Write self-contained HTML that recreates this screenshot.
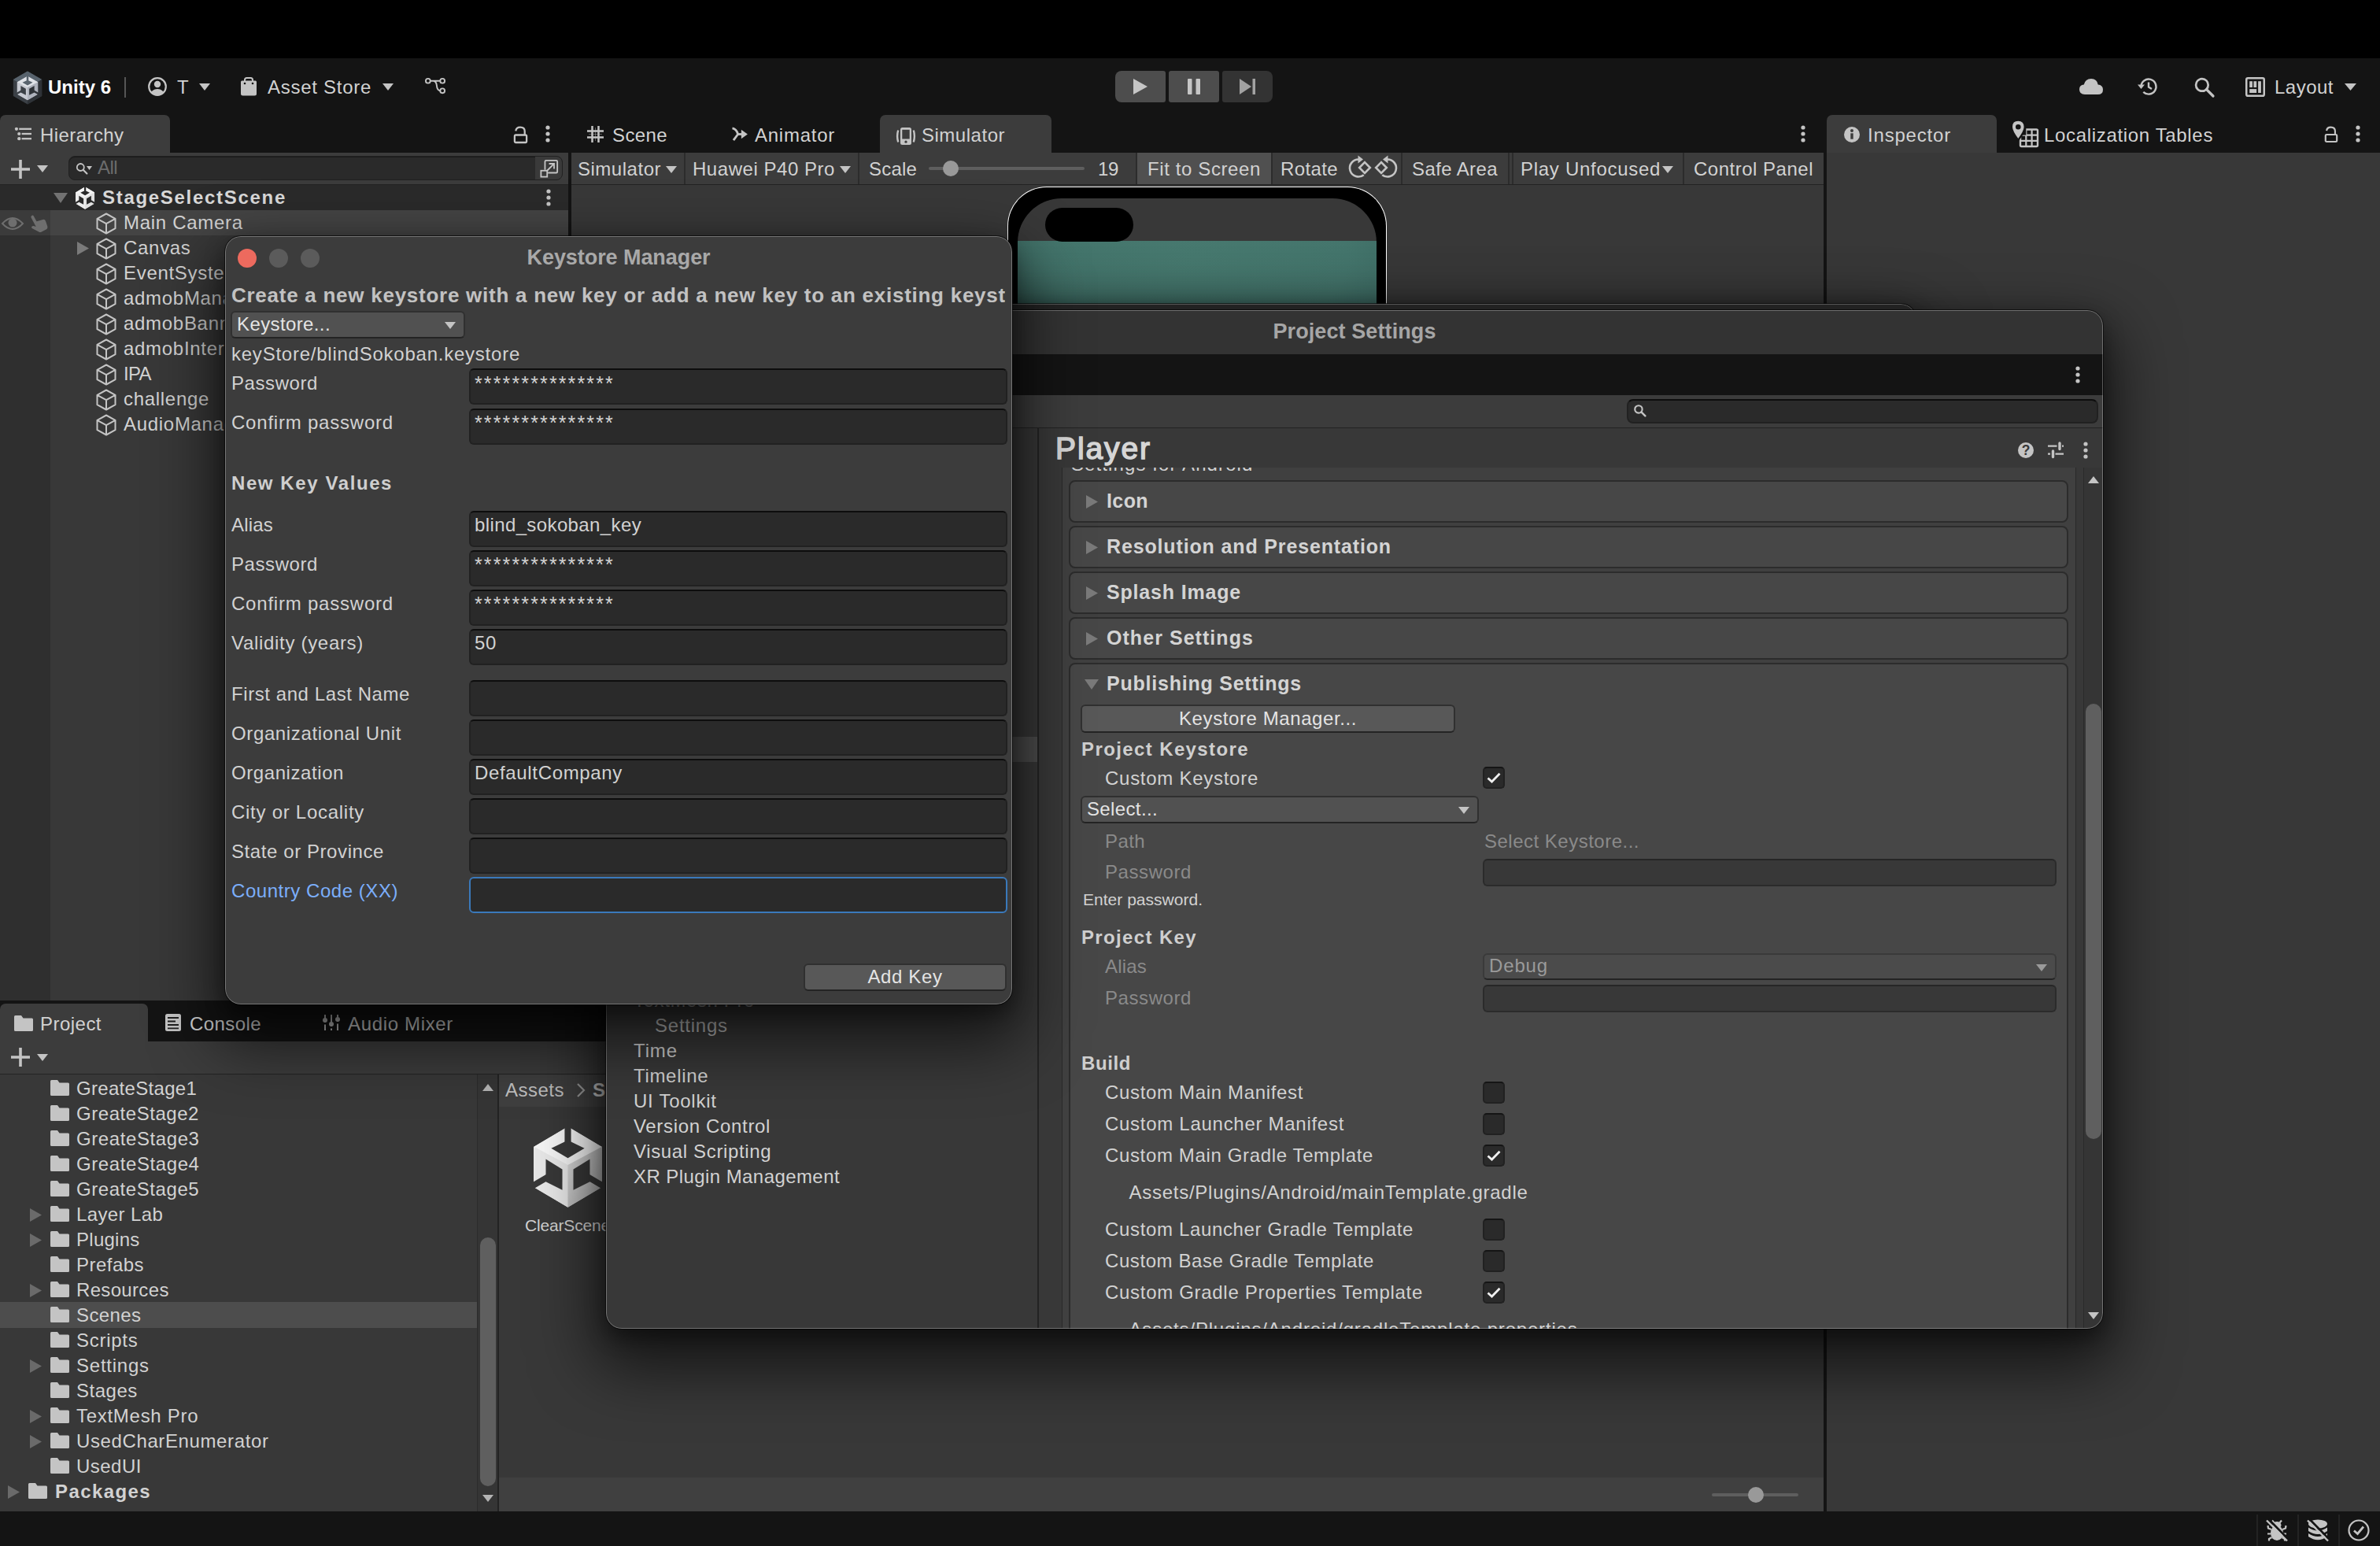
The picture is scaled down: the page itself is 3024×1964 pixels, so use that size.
<!DOCTYPE html>
<html><head><meta charset="utf-8"><title>Unity</title>
<style>
html,body{margin:0;padding:0;background:#141414;}
body{width:3024px;height:1964px;position:relative;overflow:hidden;font-family:"Liberation Sans",sans-serif;}
.t{position:absolute;white-space:nowrap;line-height:40px;height:40px;}
.win{position:absolute;overflow:hidden;}
svg{display:block;overflow:visible}
</style></head><body>
<div style="position:absolute;left:0px;top:0px;width:3024px;height:74px;background:#000;"></div>
<svg style="position:absolute;left:17.2px;top:89.5px;" width="36" height="43" viewBox="-18 -21.5 36 43"><polygon points="0.00,-21.00 18.19,-10.50 18.19,10.50 0.00,21.00 -18.19,10.50 -18.19,-10.50" fill="#3b4046"/><polygon points="0.00,-21.00 18.19,-10.50 0.00,0.00 -18.19,-10.50" fill="#58636d"/><polygon points="18.19,-10.50 0.00,0.00 0.00,21.00 18.19,10.50" fill="#2e3237"/><defs><mask id="um1" maskUnits="userSpaceOnUse" x="-15.5" y="-16.650000000000002" width="31.0" height="34.1"><polygon points="0.00,-15.10 13.42,-7.35 13.42,8.15 0.00,15.90 -13.42,8.15 -13.42,-7.35" fill="#fff"/><polygon points="0.00,-9.83 6.51,-6.73 0.00,-3.01 -6.51,-6.73" fill="#000"/><polygon points="-1.26,-16.65 1.26,-16.65 1.26,-8.90 -1.26,-8.90" fill="#000"/><polygon points="-8.63,-2.62 -2.15,1.33 -2.15,9.23 -8.63,6.01" fill="#000"/><polygon points="-14.72,6.83 -7.75,2.80 -7.75,5.50 -14.72,9.53" fill="#000"/><polygon points="8.63,-2.62 2.15,1.33 2.15,9.23 8.63,6.01" fill="#000"/><polygon points="14.72,6.83 7.75,2.80 7.75,5.50 14.72,9.53" fill="#000"/></mask></defs><g mask="url(#um1)"><polygon points="0.00,-15.10 13.42,-7.35 13.42,8.15 0.00,15.90 -13.42,8.15 -13.42,-7.35" fill="#c6c9d1"/><polygon points="0.00,-15.10 13.42,-7.35 0.00,-0.38 -13.42,-7.35" fill="#dfe2e7"/><polygon points="-13.42,-7.35 0.00,-0.38 0.00,15.90 -13.42,8.15" fill="#c6c9d1"/><polygon points="13.42,-7.35 0.00,-0.38 0.00,15.90 13.42,8.15" fill="#aeb2bc"/></g></svg>
<div class="t" style="left:61.0px;top:91.1px;font-size:24px;color:#ffffff;letter-spacing:-0.002px;font-weight:700;">Unity 6</div>
<div style="position:absolute;left:158px;top:98px;width:2px;height:26px;background:#555;"></div>
<svg style="position:absolute;left:188px;top:98px;" width="24" height="24" viewBox="0 0 24 24"><defs><clipPath id="acc"><circle cx="12" cy="12" r="10.800"/></clipPath></defs><circle cx="12" cy="12" r="10.800" fill="none" stroke="#c4c4c4" stroke-width="2.200"/><circle cx="12" cy="9" r="4.200" fill="#c4c4c4"/><ellipse cx="12" cy="21.500" rx="8.500" ry="6.500" fill="#c4c4c4" clip-path="url(#acc)"/></svg>
<div class="t" style="left:225.0px;top:91.1px;font-size:24px;color:#d2d2d2;letter-spacing:-1.656px;">T</div>
<svg style="position:absolute;left:253.0px;top:106.0px;" width="14" height="9" viewBox="0 0 14 9"><path d="M0 0H14L7.0 9Z" fill="#c4c4c4"/></svg>
<svg style="position:absolute;left:305px;top:96px;" width="22" height="26" viewBox="0 0 22 26"><path d="M1 8Q1 6.500 2.500 6.500H19.500Q21 6.500 21 8V23Q21 25.500 18.500 25.500H3.500Q1 25.500 1 23Z" fill="#c4c4c4"/><path d="M6 9V5.500Q6 3 8.500 3H13.500Q16 3 16 5.500V9" fill="none" stroke="#c4c4c4" stroke-width="2"/><circle cx="6" cy="10" r="1.300" fill="#141414"/><circle cx="16" cy="10" r="1.300" fill="#141414"/></svg>
<div class="t" style="left:340.0px;top:91.1px;font-size:24px;color:#d2d2d2;letter-spacing:0.720px;">Asset Store</div>
<svg style="position:absolute;left:486.0px;top:106.0px;" width="14" height="9" viewBox="0 0 14 9"><path d="M0 0H14L7.0 9Z" fill="#c4c4c4"/></svg>
<svg style="position:absolute;left:540px;top:98px;" width="27" height="22" viewBox="0 0 28 22"><circle cx="4" cy="4.500" r="3" fill="none" stroke="#c4c4c4" stroke-width="2"/><circle cx="23" cy="4.500" r="3" fill="none" stroke="#c4c4c4" stroke-width="2"/><circle cx="23" cy="17.500" r="3" fill="none" stroke="#c4c4c4" stroke-width="2"/><path d="M7 4.500H20M11 4.500Q15 5 15.500 11Q16 17 20 17.500" fill="none" stroke="#c4c4c4" stroke-width="2"/></svg>
<div style="position:absolute;left:1417px;top:90px;width:64px;height:40px;background:#4d4d4d;border-radius:8px 3px 3px 8px;"></div>
<div style="position:absolute;left:1485px;top:90px;width:64px;height:40px;background:#4d4d4d;border-radius:3px;"></div>
<div style="position:absolute;left:1553px;top:90px;width:64px;height:40px;background:#333;border-radius:3px 8px 8px 3px;"></div>
<svg style="position:absolute;left:1440px;top:100px;" width="18" height="20" viewBox="0 0 18 20"><path d="M0 0V20L18 10Z" fill="#c6c6c6"/></svg>
<svg style="position:absolute;left:1509px;top:100px;" width="16" height="20" viewBox="0 0 16 20"><rect x="0" y="0" width="5.500" height="20" rx="1" fill="#c6c6c6"/><rect x="10.500" y="0" width="5.500" height="20" rx="1" fill="#c6c6c6"/></svg>
<svg style="position:absolute;left:1575px;top:100px;" width="20" height="20" viewBox="0 0 20 20"><path d="M0 0V20L15 10Z" fill="#a2a2a2"/><rect x="16.500" y="0" width="3.500" height="20" fill="#a2a2a2"/></svg>
<svg style="position:absolute;left:2642px;top:100px;" width="30" height="20" viewBox="0 0 30 20"><path d="M7 20Q0 20 0 13.500Q0 8 5.800 7.500Q7.500 0 15 0Q22.500 0 23.700 7.500Q30 8 30 14Q30 20 23.500 20Z" fill="#c4c4c4"/></svg>
<svg style="position:absolute;left:2716px;top:98px;" width="26" height="24" viewBox="0 0 26 24"><path d="M4.500 12A9.500 9.500 0 1 1 7.300 18.800" fill="none" stroke="#c4c4c4" stroke-width="2.400"/><path d="M0 9.500H9L4.500 15Z" fill="#c4c4c4"/><path d="M14 6.500V12.500L18 15" fill="none" stroke="#c4c4c4" stroke-width="2.400"/></svg>
<svg style="position:absolute;left:2788px;top:98px;" width="25" height="25" viewBox="0 0 24 24"><circle cx="9.500" cy="9.500" r="7.500" fill="none" stroke="#c4c4c4" stroke-width="2.6"/><path d="M15 15L23 23" stroke="#c4c4c4" stroke-width="3.2" stroke-linecap="round"/></svg>
<svg style="position:absolute;left:2853px;top:98px;" width="25" height="25" viewBox="0 0 24 24"><rect x="1.200" y="1.200" width="21.600" height="21.600" rx="1.800" fill="none" stroke="#c4c4c4" stroke-width="2.400"/><rect x="5" y="5" width="3.600" height="7.500" fill="#c4c4c4"/><rect x="10" y="5" width="3.600" height="7.500" fill="#c4c4c4"/><rect x="15.500" y="5" width="3.600" height="14.200" fill="#c4c4c4"/><rect x="5" y="14.500" width="8.600" height="4.700" fill="#c4c4c4"/></svg>
<div class="t" style="left:2890.0px;top:91.1px;font-size:24px;color:#d2d2d2;letter-spacing:0.492px;">Layout</div>
<svg style="position:absolute;left:2978.5px;top:106.0px;" width="15" height="9" viewBox="0 0 15 9"><path d="M0 0H15L7.5 9Z" fill="#c4c4c4"/></svg>
<div style="position:absolute;left:0px;top:146px;width:216px;height:48px;background:#3c3c3c;border-radius:7px 7px 0 0;"></div>
<svg style="position:absolute;left:19px;top:161px;" width="21" height="18" viewBox="0 0 22 18"><circle cx="2" cy="2.5" r="2.200" fill="#c4c4c4"/><rect x="5.5" y="1.3" width="16.5" height="2.400" fill="#c4c4c4"/><circle cx="5.5" cy="9" r="2.200" fill="#c4c4c4"/><rect x="9.0" y="7.8" width="13.0" height="2.400" fill="#c4c4c4"/><circle cx="5.5" cy="15.5" r="2.200" fill="#c4c4c4"/><rect x="9.0" y="14.3" width="13.0" height="2.400" fill="#c4c4c4"/></svg>
<div class="t" style="left:51.0px;top:151.9px;font-size:24px;color:#d2d2d2;letter-spacing:0.424px;">Hierarchy</div>
<svg style="position:absolute;left:652px;top:160px;" width="19" height="23" viewBox="0 0 20 24"><rect x="2" y="12" width="16" height="10" rx="1.500" fill="none" stroke="#c4c4c4" stroke-width="2.400"/><path d="M3.5 6.500Q4 1.500 9.500 1.500Q15.500 1.500 15.500 7V12" fill="none" stroke="#c4c4c4" stroke-width="2.400"/></svg>
<svg style="position:absolute;left:692px;top:158px;" width="8" height="24" viewBox="0 0 8 24"><circle cx="4" cy="4" r="2.6" fill="#c4c4c4"/><circle cx="4" cy="12" r="2.6" fill="#c4c4c4"/><circle cx="4" cy="20" r="2.6" fill="#c4c4c4"/></svg>
<svg style="position:absolute;left:746px;top:160px;" width="21" height="21" viewBox="0 0 20 20"><path d="M6.200 0V20M13.800 0V20M0 6.200H20M0 13.800H20" stroke="#c4c4c4" stroke-width="2.400" fill="none"/><path d="M10 2V18M2 10H18" stroke="#c4c4c4" stroke-width="0.800" fill="none" opacity="0.500"/></svg>
<div class="t" style="left:778.0px;top:151.9px;font-size:24px;color:#d2d2d2;letter-spacing:0.391px;">Scene</div>
<svg style="position:absolute;left:929px;top:162px;" width="21" height="17" viewBox="0 0 22 18"><path d="M1.500 1Q7 2 9 9L3 17" fill="none" stroke="#c4c4c4" stroke-width="3" stroke-linejoin="round"/><path d="M8 9H17" stroke="#c4c4c4" stroke-width="3"/><path d="M13.500 3L22 9L13.500 15Z" fill="#c4c4c4"/></svg>
<div class="t" style="left:959.0px;top:151.9px;font-size:24px;color:#d2d2d2;letter-spacing:0.744px;">Animator</div>
<div style="position:absolute;left:1118px;top:146px;width:218px;height:48px;background:#3c3c3c;border-radius:7px 7px 0 0;"></div>
<svg style="position:absolute;left:1138px;top:159.5px;" width="26" height="24" viewBox="0 0 26 24"><rect x="6" y="2" width="14" height="22" rx="2.500" fill="#c4c4c4"/><rect x="8.300" y="4.800" width="9.400" height="11.700" fill="#3c3c3c"/><circle cx="13" cy="20.200" r="1.600" fill="#3c3c3c"/><path d="M3.200 5.500Q1 13 3.200 20.500M22.800 5.500Q25 13 22.800 20.500" fill="none" stroke="#c4c4c4" stroke-width="2.400"/></svg>
<div class="t" style="left:1171.0px;top:151.9px;font-size:24px;color:#d2d2d2;letter-spacing:0.514px;">Simulator</div>
<svg style="position:absolute;left:2287px;top:158px;" width="8" height="24" viewBox="0 0 8 24"><circle cx="4" cy="4" r="2.6" fill="#c4c4c4"/><circle cx="4" cy="12" r="2.6" fill="#c4c4c4"/><circle cx="4" cy="20" r="2.6" fill="#c4c4c4"/></svg>
<div style="position:absolute;left:2321px;top:146px;width:216px;height:48px;background:#3c3c3c;border-radius:7px 7px 0 0;"></div>
<svg style="position:absolute;left:2343px;top:161px;" width="20" height="20" viewBox="0 0 20 20"><circle cx="10" cy="10" r="10" fill="#c4c4c4"/><rect x="8.300" y="8.300" width="3.400" height="7.400" fill="#3c3c3c"/><circle cx="10" cy="5" r="2" fill="#3c3c3c"/></svg>
<div class="t" style="left:2373.0px;top:151.9px;font-size:24px;color:#d2d2d2;letter-spacing:0.809px;">Inspector</div>
<svg style="position:absolute;left:2556px;top:154px;" width="34" height="33" viewBox="0 0 34 33"><rect x="11" y="10.500" width="22" height="21.500" rx="1.500" fill="none" stroke="#c4c4c4" stroke-width="2.400"/><path d="M18.300 10.500V32M25.600 10.500V32M11 17.600H33M11 24.800H33" stroke="#c4c4c4" stroke-width="2.200"/><rect x="8" y="8" width="10.300" height="9.600" fill="#141414"/><path d="M18.300 9.300V17.600H9.800V24" fill="none" stroke="#c4c4c4" stroke-width="2.400" opacity="0"/><path d="M8.300 -1.500Q16.800 -1.500 16.800 7.300Q16.800 13 8.300 24Q-0.200 13 -0.200 7.300Q-0.200 -1.500 8.300 -1.500Z" fill="#c4c4c4" stroke="#141414" stroke-width="2.400"/><circle cx="8.300" cy="7.300" r="3.300" fill="#141414"/></svg>
<div class="t" style="left:2597.0px;top:151.9px;font-size:24px;color:#d2d2d2;letter-spacing:0.668px;">Localization Tables</div>
<svg style="position:absolute;left:2953px;top:160px;" width="18" height="22" viewBox="0 0 20 24"><rect x="2" y="12" width="16" height="10" rx="1.500" fill="none" stroke="#c4c4c4" stroke-width="2.400"/><path d="M3.5 6.500Q4 1.500 9.500 1.500Q15.500 1.500 15.500 7V12" fill="none" stroke="#c4c4c4" stroke-width="2.400"/></svg>
<svg style="position:absolute;left:2992px;top:158px;" width="8" height="24" viewBox="0 0 8 24"><circle cx="4" cy="4" r="2.6" fill="#c4c4c4"/><circle cx="4" cy="12" r="2.6" fill="#c4c4c4"/><circle cx="4" cy="20" r="2.6" fill="#c4c4c4"/></svg>
<div style="position:absolute;left:0px;top:194px;width:722px;height:1077px;background:#383838;"></div>
<div style="position:absolute;left:0px;top:194px;width:722px;height:40px;background:#3c3c3c;"></div>
<div style="position:absolute;left:0px;top:234px;width:722px;height:1px;background:#232323;"></div>
<svg style="position:absolute;left:14px;top:203px;" width="24" height="24" viewBox="0 0 24 24"><path d="M12 0V24M0 12H24" stroke="#c4c4c4" stroke-width="3.600"/></svg>
<svg style="position:absolute;left:47.0px;top:210.0px;" width="14" height="9" viewBox="0 0 14 9"><path d="M0 0H14L7.0 9Z" fill="#c4c4c4"/></svg>
<div style="position:absolute;left:87px;top:198px;width:628px;height:31px;background:#2a2a2a;border-radius:8px;box-shadow:inset 0 1px 0 #1a1a1a;border:1px solid #212121;box-sizing:border-box;"></div>
<svg style="position:absolute;left:96px;top:206px;" width="18" height="16" viewBox="-1 -1 30 26"><circle cx="9.500" cy="9.500" r="7.500" fill="none" stroke="#c4c4c4" stroke-width="3"/><path d="M15 15L23 23" stroke="#c4c4c4" stroke-width="3.6" stroke-linecap="round"/></svg>
<svg style="position:absolute;left:110px;top:211px;" width="7" height="5" viewBox="0 0 7 5"><path d="M0 0H7L3.500 5Z" fill="#c4c4c4"/></svg>
<div class="t" style="left:124.0px;top:192.6px;font-size:24px;color:#6c6c6c;letter-spacing:-0.557px;">All</div>
<div style="position:absolute;left:680px;top:199px;width:34px;height:29px;background:#3a3a3a;border-radius:0 7px 7px 0;"></div>
<svg style="position:absolute;left:686px;top:202px;" width="24" height="24" viewBox="0 0 26 26"><path d="M7 15V3.500Q7 2 8.500 2H22.500Q24 2 24 3.500V17.500Q24 19 22.500 19H11" fill="none" stroke="#c4c4c4" stroke-width="2"/><rect x="1.500" y="16" width="8.500" height="8.500" fill="none" stroke="#c4c4c4" stroke-width="2"/><path d="M10 16L19 7M12.500 6.500H19.500V13.500" fill="none" stroke="#c4c4c4" stroke-width="2"/></svg>
<div style="position:absolute;left:0px;top:235px;width:722px;height:32px;background:#2a2a2a;"></div>
<div style="position:absolute;left:0px;top:267px;width:64px;height:1004px;background:#2f2f2f;"></div>
<div style="position:absolute;left:0px;top:267px;width:722px;height:32px;background:#444;"></div>
<div style="position:absolute;left:0px;top:267px;width:64px;height:32px;background:#3b3b3b;"></div>
<svg style="position:absolute;left:68.0px;top:244.5px;" width="18" height="13" viewBox="0 0 18 13"><path d="M0 0H18L9.0 13Z" fill="#727272"/></svg>
<svg style="position:absolute;left:96px;top:236.5px" width="24.2" height="29" viewBox="-43.3 -50 86.6 100" preserveAspectRatio="none"><defs><mask id="um2" maskUnits="userSpaceOnUse" x="-50" y="-55.00000000000001" width="100" height="110.00000000000001"><polygon points="0.00,-50.00 43.30,-25.00 43.30,25.00 0.00,50.00 -43.30,25.00 -43.30,-25.00" fill="#fff"/><polygon points="0.00,-33.00 21.00,-23.00 0.00,-11.00 -21.00,-23.00" fill="#000"/><polygon points="-4.05,-55.00 4.05,-55.00 4.05,-30.00 -4.05,-30.00" fill="#000"/><polygon points="-27.85,-9.75 -6.95,3.00 -6.95,28.50 -27.85,18.10" fill="#000"/><polygon points="-47.50,20.75 -25.00,7.75 -25.00,16.45 -47.50,29.45" fill="#000"/><polygon points="27.85,-9.75 6.95,3.00 6.95,28.50 27.85,18.10" fill="#000"/><polygon points="47.50,20.75 25.00,7.75 25.00,16.45 47.50,29.45" fill="#000"/></mask></defs><g mask="url(#um2)"><polygon points="0.00,-50.00 43.30,-25.00 43.30,25.00 0.00,50.00 -43.30,25.00 -43.30,-25.00" fill="#ececec"/><polygon points="0.00,-50.00 43.30,-25.00 0.00,-2.50 -43.30,-25.00" fill="#f4f4f4"/><polygon points="-43.30,-25.00 0.00,-2.50 0.00,50.00 -43.30,25.00" fill="#ececec"/><polygon points="43.30,-25.00 0.00,-2.50 0.00,50.00 43.30,25.00" fill="#e0e0e0"/></g></svg>
<div class="t" style="left:130.0px;top:231.1px;font-size:24px;color:#d8d8d8;letter-spacing:1.701px;font-weight:700;">StageSelectScene</div>
<svg style="position:absolute;left:693px;top:239px;" width="8" height="24" viewBox="0 0 8 24"><circle cx="4" cy="4" r="2.6" fill="#c4c4c4"/><circle cx="4" cy="12" r="2.6" fill="#c4c4c4"/><circle cx="4" cy="20" r="2.6" fill="#c4c4c4"/></svg>
<svg style="position:absolute;left:2px;top:275px;" width="28" height="18" viewBox="0 0 28 18"><path d="M1 9Q14 -5 27 9Q14 23 1 9Z" fill="none" stroke="#6e6e6e" stroke-width="2"/><circle cx="14" cy="8" r="5.500" fill="#6e6e6e"/></svg>
<svg style="position:absolute;left:35px;top:270px;" width="26" height="26" viewBox="0 0 24 24"><g transform="rotate(-28 12 12)"><path d="M9 1.500Q11.500 0.500 11.500 3V10L19 11.500Q21.500 12 21 15L20 21Q19.500 23.500 17 23.500H10.500Q9 23.500 8 22L3 14.500Q2.500 13 4 12.500Q5.500 12.300 6.500 13.500L8 15V3Q8 2 9 1.500Z" fill="#6e6e6e"/></g></svg>
<svg style="position:absolute;left:122px;top:270.2px;" width="26" height="28" viewBox="0 0 26 28"><path d="M13 1.5L24.500 7.800V20.200L13 26.500L1.500 20.200V7.800Z M1.500 7.800L13 14.200L24.500 7.800 M13 14.200V26.500" fill="none" stroke="#c4c4c4" stroke-width="2" stroke-linejoin="round"/></svg>
<div class="t" style="left:157.0px;top:263.1px;font-size:24px;color:#d2d2d2;letter-spacing:0.700px;">Main Camera</div>
<svg style="position:absolute;left:122px;top:302.2px;" width="26" height="28" viewBox="0 0 26 28"><path d="M13 1.5L24.500 7.800V20.200L13 26.500L1.500 20.200V7.800Z M1.500 7.800L13 14.200L24.500 7.800 M13 14.200V26.500" fill="none" stroke="#c4c4c4" stroke-width="2" stroke-linejoin="round"/></svg>
<div class="t" style="left:157.0px;top:295.1px;font-size:24px;color:#d2d2d2;letter-spacing:0.700px;">Canvas</div>
<svg style="position:absolute;left:122px;top:334.2px;" width="26" height="28" viewBox="0 0 26 28"><path d="M13 1.5L24.500 7.800V20.200L13 26.500L1.500 20.200V7.800Z M1.500 7.800L13 14.200L24.500 7.800 M13 14.200V26.500" fill="none" stroke="#c4c4c4" stroke-width="2" stroke-linejoin="round"/></svg>
<div class="t" style="left:157.0px;top:327.1px;font-size:24px;color:#d2d2d2;letter-spacing:0.700px;">EventSystem</div>
<svg style="position:absolute;left:122px;top:366.2px;" width="26" height="28" viewBox="0 0 26 28"><path d="M13 1.5L24.500 7.800V20.200L13 26.500L1.500 20.200V7.800Z M1.500 7.800L13 14.200L24.500 7.800 M13 14.200V26.500" fill="none" stroke="#c4c4c4" stroke-width="2" stroke-linejoin="round"/></svg>
<div class="t" style="left:157.0px;top:359.1px;font-size:24px;color:#d2d2d2;letter-spacing:0.700px;">admobManager</div>
<svg style="position:absolute;left:122px;top:398.2px;" width="26" height="28" viewBox="0 0 26 28"><path d="M13 1.5L24.500 7.800V20.200L13 26.500L1.500 20.200V7.800Z M1.500 7.800L13 14.200L24.500 7.800 M13 14.200V26.500" fill="none" stroke="#c4c4c4" stroke-width="2" stroke-linejoin="round"/></svg>
<div class="t" style="left:157.0px;top:391.1px;font-size:24px;color:#d2d2d2;letter-spacing:0.700px;">admobBanner</div>
<svg style="position:absolute;left:122px;top:430.2px;" width="26" height="28" viewBox="0 0 26 28"><path d="M13 1.5L24.500 7.800V20.200L13 26.500L1.500 20.200V7.800Z M1.500 7.800L13 14.200L24.500 7.800 M13 14.200V26.500" fill="none" stroke="#c4c4c4" stroke-width="2" stroke-linejoin="round"/></svg>
<div class="t" style="left:157.0px;top:423.1px;font-size:24px;color:#d2d2d2;letter-spacing:0.700px;">admobInterstitial</div>
<svg style="position:absolute;left:122px;top:462.2px;" width="26" height="28" viewBox="0 0 26 28"><path d="M13 1.5L24.500 7.800V20.200L13 26.500L1.500 20.200V7.800Z M1.500 7.800L13 14.200L24.500 7.800 M13 14.200V26.500" fill="none" stroke="#c4c4c4" stroke-width="2" stroke-linejoin="round"/></svg>
<div class="t" style="left:157.0px;top:455.1px;font-size:24px;color:#d2d2d2;letter-spacing:-0.641px;">IPA</div>
<svg style="position:absolute;left:122px;top:494.2px;" width="26" height="28" viewBox="0 0 26 28"><path d="M13 1.5L24.500 7.800V20.200L13 26.500L1.500 20.200V7.800Z M1.500 7.800L13 14.200L24.500 7.800 M13 14.200V26.500" fill="none" stroke="#c4c4c4" stroke-width="2" stroke-linejoin="round"/></svg>
<div class="t" style="left:157.0px;top:487.1px;font-size:24px;color:#d2d2d2;letter-spacing:0.700px;">challenge</div>
<svg style="position:absolute;left:122px;top:526.2px;" width="26" height="28" viewBox="0 0 26 28"><path d="M13 1.5L24.500 7.800V20.200L13 26.500L1.500 20.200V7.800Z M1.500 7.800L13 14.200L24.500 7.800 M13 14.200V26.500" fill="none" stroke="#c4c4c4" stroke-width="2" stroke-linejoin="round"/></svg>
<div class="t" style="left:157.0px;top:519.1px;font-size:24px;color:#d2d2d2;letter-spacing:0.700px;">AudioManager</div>
<svg style="position:absolute;left:98.0px;top:306.5px;" width="15" height="17" viewBox="0 0 15 17"><path d="M0 0V17L15 8.5Z" fill="#7a7a7a"/></svg>
<div style="position:absolute;left:726px;top:194px;width:1591px;height:1077px;background:#383838;"></div>
<div style="position:absolute;left:726px;top:194px;width:1591px;height:40px;background:#3c3c3c;"></div>
<div style="position:absolute;left:726px;top:234px;width:1591px;height:1px;background:#232323;"></div>
<div class="t" style="left:734.0px;top:195.1px;font-size:24px;color:#d2d2d2;letter-spacing:0.514px;">Simulator</div>
<svg style="position:absolute;left:846.0px;top:210.5px;" width="14" height="9" viewBox="0 0 14 9"><path d="M0 0H14L7.0 9Z" fill="#c4c4c4"/></svg>
<div style="position:absolute;left:869px;top:194px;width:2px;height:40px;background:#2c2c2c;"></div>
<div class="t" style="left:880.0px;top:195.1px;font-size:24px;color:#d2d2d2;letter-spacing:0.541px;">Huawei P40 Pro</div>
<svg style="position:absolute;left:1067.0px;top:210.5px;" width="14" height="9" viewBox="0 0 14 9"><path d="M0 0H14L7.0 9Z" fill="#c4c4c4"/></svg>
<div style="position:absolute;left:1090px;top:194px;width:2px;height:40px;background:#2c2c2c;"></div>
<div class="t" style="left:1104.0px;top:195.1px;font-size:24px;color:#d2d2d2;letter-spacing:0.194px;">Scale</div>
<div style="position:absolute;left:1180px;top:212px;width:198px;height:4px;background:#5e5e5e;border-radius:2px;"></div>
<div style="position:absolute;left:1198px;top:204px;width:20px;height:20px;background:#999;border-radius:50%;"></div>
<div class="t" style="left:1395.0px;top:195.1px;font-size:24px;color:#d2d2d2;letter-spacing:-0.344px;">19</div>
<div style="position:absolute;left:1443px;top:194px;width:2px;height:40px;background:#2c2c2c;"></div>
<div style="position:absolute;left:1445px;top:194px;width:170px;height:40px;background:#505050;"></div>
<div class="t" style="left:1458.0px;top:195.1px;font-size:24px;color:#d2d2d2;letter-spacing:0.611px;">Fit to Screen</div>
<div style="position:absolute;left:1615px;top:194px;width:2px;height:40px;background:#2c2c2c;"></div>
<div class="t" style="left:1627.0px;top:195.1px;font-size:24px;color:#d2d2d2;letter-spacing:0.383px;">Rotate</div>
<svg style="position:absolute;left:1713px;top:198px;" width="30" height="28" viewBox="0 0 30 28"><path d="M13.38 4.51A11 11 0 1 0 19.77 24.17" fill="none" stroke="#c4c4c4" stroke-width="2.600"/><path d="M12.500 -0.500L19 4.500L12.500 9.500Z" fill="#c4c4c4"/><path d="M21 8.200L27.800 15L21 21.800L14.200 15Z" fill="none" stroke="#c4c4c4" stroke-width="2.600"/></svg>
<svg style="position:absolute;left:1746px;top:198px;" width="30" height="28" viewBox="0 0 30 28"><g transform="translate(30 0) scale(-1 1)"><path d="M13.38 4.51A11 11 0 1 0 19.77 24.17" fill="none" stroke="#c4c4c4" stroke-width="2.600"/><path d="M12.500 -0.500L19 4.500L12.500 9.500Z" fill="#c4c4c4"/><path d="M21 8.200L27.800 15L21 21.800L14.200 15Z" fill="none" stroke="#c4c4c4" stroke-width="2.600"/></g></svg>
<div style="position:absolute;left:1780px;top:194px;width:2px;height:40px;background:#2c2c2c;"></div>
<div class="t" style="left:1794.0px;top:195.1px;font-size:24px;color:#d2d2d2;letter-spacing:0.398px;">Safe Area</div>
<div style="position:absolute;left:1916px;top:194px;width:2px;height:40px;background:#2c2c2c;"></div>
<div style="position:absolute;left:1921px;top:194px;width:2px;height:40px;background:#2c2c2c;"></div>
<div class="t" style="left:1932.0px;top:195.1px;font-size:24px;color:#d2d2d2;letter-spacing:0.709px;">Play Unfocused</div>
<svg style="position:absolute;left:2112.0px;top:210.5px;" width="14" height="9" viewBox="0 0 14 9"><path d="M0 0H14L7.0 9Z" fill="#c4c4c4"/></svg>
<div style="position:absolute;left:2138px;top:194px;width:2px;height:40px;background:#2c2c2c;"></div>
<div class="t" style="left:2152.0px;top:195.1px;font-size:24px;color:#d2d2d2;letter-spacing:0.507px;">Control Panel</div>
<div style="position:absolute;left:1280px;top:237px;width:482px;height:200px;border:1.5px solid #fff;border-bottom:none;border-radius:50px 50px 0 0;background:#000;box-sizing:border-box;"></div>
<div style="position:absolute;left:1293px;top:252px;width:456px;height:160px;border-radius:56px 56px 0 0;background:#383838;overflow:hidden;"><div style="position:absolute;left:0;top:54px;width:456px;height:110px;background:radial-gradient(ellipse 70% 160% at 50% 20%,#47796f 0%,#44756c 60%,#3a6660 100%);"></div></div>
<div style="position:absolute;left:1328px;top:264px;width:112px;height:43px;background:#000;border-radius:22px;"></div>
<div style="position:absolute;left:2321px;top:194px;width:703px;height:1726px;background:#383838;"></div>
<div style="position:absolute;left:0px;top:1275px;width:188px;height:48px;background:#3c3c3c;border-radius:7px 7px 0 0;"></div>
<svg style="position:absolute;left:18px;top:1290px;" width="24" height="20" viewBox="0 0 24 20"><path d="M1.500 0H9L11.500 3.500H22.500Q24 3.500 24 5V18.500Q24 20 22.500 20H1.500Q0 20 0 18.500V1.500Q0 0 1.500 0Z" fill="#c4c4c4"/></svg>
<div class="t" style="left:51.0px;top:1280.6px;font-size:24px;color:#d2d2d2;letter-spacing:0.471px;">Project</div>
<svg style="position:absolute;left:210px;top:1288px;" width="20" height="22" viewBox="0 0 20 22"><rect x="0" y="0" width="20" height="22" rx="2.500" fill="#c4c4c4"/><path d="M3 5H17M3 9.500H13M3 14H17M3 18.300H17" stroke="#1e1e1e" stroke-width="1.800"/></svg>
<div class="t" style="left:241.0px;top:1280.6px;font-size:24px;color:#d2d2d2;letter-spacing:0.424px;">Console</div>
<svg style="position:absolute;left:410px;top:1289px;" width="22" height="20" viewBox="0 0 22 20"><path d="M3 0V20" stroke="#c4c4c4" stroke-width="2"/><circle cx="3" cy="7" r="3" fill="#c4c4c4"/><rect x="0.5" y="10" width="5" height="2.500" fill="#141414"/><path d="M11 0V20" stroke="#c4c4c4" stroke-width="2"/><circle cx="11" cy="12" r="3" fill="#c4c4c4"/><rect x="8.5" y="15" width="5" height="2.500" fill="#141414"/><path d="M19 0V20" stroke="#c4c4c4" stroke-width="2"/><circle cx="19" cy="6" r="3" fill="#c4c4c4"/><rect x="16.5" y="9" width="5" height="2.500" fill="#141414"/></svg>
<div class="t" style="left:442.0px;top:1280.6px;font-size:24px;color:#d2d2d2;letter-spacing:0.662px;">Audio Mixer</div>
<div style="position:absolute;left:0px;top:1323px;width:2317px;height:597px;background:#383838;"></div>
<div style="position:absolute;left:0px;top:1323px;width:2317px;height:41px;background:#3c3c3c;"></div>
<div style="position:absolute;left:0px;top:1364px;width:2317px;height:1px;background:#232323;"></div>
<svg style="position:absolute;left:14px;top:1331px;" width="24" height="24" viewBox="0 0 24 24"><path d="M12 0V24M0 12H24" stroke="#c4c4c4" stroke-width="3.600"/></svg>
<svg style="position:absolute;left:47.0px;top:1339.0px;" width="14" height="9" viewBox="0 0 14 9"><path d="M0 0H14L7.0 9Z" fill="#c4c4c4"/></svg>
<svg style="position:absolute;left:64px;top:1372px;" width="24" height="20" viewBox="0 0 24 20"><path d="M1.500 0H9L11.500 3.500H22.500Q24 3.500 24 5V18.500Q24 20 22.500 20H1.500Q0 20 0 18.500V1.500Q0 0 1.500 0Z" fill="#c4c4c4"/></svg>
<div class="t" style="left:97.0px;top:1363.1px;font-size:24px;color:#d2d2d2;letter-spacing:0.305px;">GreateStage1</div>
<svg style="position:absolute;left:64px;top:1404px;" width="24" height="20" viewBox="0 0 24 20"><path d="M1.500 0H9L11.500 3.500H22.500Q24 3.500 24 5V18.500Q24 20 22.500 20H1.500Q0 20 0 18.500V1.500Q0 0 1.500 0Z" fill="#c4c4c4"/></svg>
<div class="t" style="left:97.0px;top:1395.1px;font-size:24px;color:#d2d2d2;letter-spacing:0.547px;">GreateStage2</div>
<svg style="position:absolute;left:64px;top:1436px;" width="24" height="20" viewBox="0 0 24 20"><path d="M1.500 0H9L11.500 3.500H22.500Q24 3.500 24 5V18.500Q24 20 22.500 20H1.500Q0 20 0 18.500V1.500Q0 0 1.500 0Z" fill="#c4c4c4"/></svg>
<div class="t" style="left:97.0px;top:1427.1px;font-size:24px;color:#d2d2d2;letter-spacing:0.589px;">GreateStage3</div>
<svg style="position:absolute;left:64px;top:1468px;" width="24" height="20" viewBox="0 0 24 20"><path d="M1.500 0H9L11.500 3.500H22.500Q24 3.500 24 5V18.500Q24 20 22.500 20H1.500Q0 20 0 18.500V1.500Q0 0 1.500 0Z" fill="#c4c4c4"/></svg>
<div class="t" style="left:97.0px;top:1459.1px;font-size:24px;color:#d2d2d2;letter-spacing:0.589px;">GreateStage4</div>
<svg style="position:absolute;left:64px;top:1500px;" width="24" height="20" viewBox="0 0 24 20"><path d="M1.500 0H9L11.500 3.500H22.500Q24 3.500 24 5V18.500Q24 20 22.500 20H1.500Q0 20 0 18.500V1.500Q0 0 1.500 0Z" fill="#c4c4c4"/></svg>
<div class="t" style="left:97.0px;top:1491.1px;font-size:24px;color:#d2d2d2;letter-spacing:0.564px;">GreateStage5</div>
<svg style="position:absolute;left:64px;top:1532px;" width="24" height="20" viewBox="0 0 24 20"><path d="M1.500 0H9L11.500 3.500H22.500Q24 3.500 24 5V18.500Q24 20 22.500 20H1.500Q0 20 0 18.500V1.500Q0 0 1.500 0Z" fill="#c4c4c4"/></svg>
<svg style="position:absolute;left:38.0px;top:1535.0px;" width="15" height="17" viewBox="0 0 15 17"><path d="M0 0V17L15 8.5Z" fill="#6a6a6a"/></svg>
<div class="t" style="left:97.0px;top:1523.1px;font-size:24px;color:#d2d2d2;letter-spacing:0.374px;">Layer Lab</div>
<svg style="position:absolute;left:64px;top:1564px;" width="24" height="20" viewBox="0 0 24 20"><path d="M1.500 0H9L11.500 3.500H22.500Q24 3.500 24 5V18.500Q24 20 22.500 20H1.500Q0 20 0 18.500V1.500Q0 0 1.500 0Z" fill="#c4c4c4"/></svg>
<svg style="position:absolute;left:38.0px;top:1567.0px;" width="15" height="17" viewBox="0 0 15 17"><path d="M0 0V17L15 8.5Z" fill="#6a6a6a"/></svg>
<div class="t" style="left:97.0px;top:1555.1px;font-size:24px;color:#d2d2d2;letter-spacing:0.271px;">Plugins</div>
<svg style="position:absolute;left:64px;top:1596px;" width="24" height="20" viewBox="0 0 24 20"><path d="M1.500 0H9L11.500 3.500H22.500Q24 3.500 24 5V18.500Q24 20 22.500 20H1.500Q0 20 0 18.500V1.500Q0 0 1.500 0Z" fill="#c4c4c4"/></svg>
<div class="t" style="left:97.0px;top:1587.1px;font-size:24px;color:#d2d2d2;letter-spacing:0.483px;">Prefabs</div>
<svg style="position:absolute;left:64px;top:1628px;" width="24" height="20" viewBox="0 0 24 20"><path d="M1.500 0H9L11.500 3.500H22.500Q24 3.500 24 5V18.500Q24 20 22.500 20H1.500Q0 20 0 18.500V1.500Q0 0 1.500 0Z" fill="#c4c4c4"/></svg>
<svg style="position:absolute;left:38.0px;top:1631.0px;" width="15" height="17" viewBox="0 0 15 17"><path d="M0 0V17L15 8.5Z" fill="#6a6a6a"/></svg>
<div class="t" style="left:97.0px;top:1619.1px;font-size:24px;color:#d2d2d2;letter-spacing:0.333px;">Resources</div>
<div style="position:absolute;left:0px;top:1654px;width:606px;height:33px;background:#4d4d4d;"></div>
<svg style="position:absolute;left:64px;top:1660px;" width="24" height="20" viewBox="0 0 24 20"><path d="M1.500 0H9L11.500 3.500H22.500Q24 3.500 24 5V18.500Q24 20 22.500 20H1.500Q0 20 0 18.500V1.500Q0 0 1.500 0Z" fill="#c4c4c4"/></svg>
<div class="t" style="left:97.0px;top:1651.1px;font-size:24px;color:#d2d2d2;letter-spacing:0.392px;">Scenes</div>
<svg style="position:absolute;left:64px;top:1692px;" width="24" height="20" viewBox="0 0 24 20"><path d="M1.500 0H9L11.500 3.500H22.500Q24 3.500 24 5V18.500Q24 20 22.500 20H1.500Q0 20 0 18.500V1.500Q0 0 1.500 0Z" fill="#c4c4c4"/></svg>
<div class="t" style="left:97.0px;top:1683.1px;font-size:24px;color:#d2d2d2;letter-spacing:0.720px;">Scripts</div>
<svg style="position:absolute;left:64px;top:1724px;" width="24" height="20" viewBox="0 0 24 20"><path d="M1.500 0H9L11.500 3.500H22.500Q24 3.500 24 5V18.500Q24 20 22.500 20H1.500Q0 20 0 18.500V1.500Q0 0 1.500 0Z" fill="#c4c4c4"/></svg>
<svg style="position:absolute;left:38.0px;top:1727.0px;" width="15" height="17" viewBox="0 0 15 17"><path d="M0 0V17L15 8.5Z" fill="#6a6a6a"/></svg>
<div class="t" style="left:97.0px;top:1715.1px;font-size:24px;color:#d2d2d2;letter-spacing:0.760px;">Settings</div>
<svg style="position:absolute;left:64px;top:1756px;" width="24" height="20" viewBox="0 0 24 20"><path d="M1.500 0H9L11.500 3.500H22.500Q24 3.500 24 5V18.500Q24 20 22.500 20H1.500Q0 20 0 18.500V1.500Q0 0 1.500 0Z" fill="#c4c4c4"/></svg>
<div class="t" style="left:97.0px;top:1747.1px;font-size:24px;color:#d2d2d2;letter-spacing:0.530px;">Stages</div>
<svg style="position:absolute;left:64px;top:1788px;" width="24" height="20" viewBox="0 0 24 20"><path d="M1.500 0H9L11.500 3.500H22.500Q24 3.500 24 5V18.500Q24 20 22.500 20H1.500Q0 20 0 18.500V1.500Q0 0 1.500 0Z" fill="#c4c4c4"/></svg>
<svg style="position:absolute;left:38.0px;top:1791.0px;" width="15" height="17" viewBox="0 0 15 17"><path d="M0 0V17L15 8.5Z" fill="#6a6a6a"/></svg>
<div class="t" style="left:97.0px;top:1779.1px;font-size:24px;color:#d2d2d2;letter-spacing:0.714px;">TextMesh Pro</div>
<svg style="position:absolute;left:64px;top:1820px;" width="24" height="20" viewBox="0 0 24 20"><path d="M1.500 0H9L11.500 3.500H22.500Q24 3.500 24 5V18.500Q24 20 22.500 20H1.500Q0 20 0 18.500V1.500Q0 0 1.500 0Z" fill="#c4c4c4"/></svg>
<svg style="position:absolute;left:38.0px;top:1823.0px;" width="15" height="17" viewBox="0 0 15 17"><path d="M0 0V17L15 8.5Z" fill="#6a6a6a"/></svg>
<div class="t" style="left:97.0px;top:1811.1px;font-size:24px;color:#d2d2d2;letter-spacing:0.615px;">UsedCharEnumerator</div>
<svg style="position:absolute;left:64px;top:1852px;" width="24" height="20" viewBox="0 0 24 20"><path d="M1.500 0H9L11.500 3.500H22.500Q24 3.500 24 5V18.500Q24 20 22.500 20H1.500Q0 20 0 18.500V1.500Q0 0 1.500 0Z" fill="#c4c4c4"/></svg>
<div class="t" style="left:97.0px;top:1843.1px;font-size:24px;color:#d2d2d2;letter-spacing:0.481px;">UsedUI</div>
<svg style="position:absolute;left:36px;top:1884px;" width="24" height="20" viewBox="0 0 24 20"><path d="M1.500 0H9L11.500 3.500H22.500Q24 3.500 24 5V18.500Q24 20 22.500 20H1.500Q0 20 0 18.500V1.500Q0 0 1.500 0Z" fill="#c4c4c4"/></svg>
<svg style="position:absolute;left:10.0px;top:1887.0px;" width="15" height="17" viewBox="0 0 15 17"><path d="M0 0V17L15 8.5Z" fill="#6a6a6a"/></svg>
<div class="t" style="left:70.0px;top:1875.1px;font-size:24px;color:#d2d2d2;letter-spacing:1.408px;font-weight:700;">Packages</div>
<div style="position:absolute;left:606px;top:1365px;width:26px;height:555px;background:#353535;border-left:1px solid #2b2b2b;box-sizing:border-box;"></div>
<svg style="position:absolute;left:613px;top:1377px;" width="14" height="9" viewBox="0 0 14 9"><path d="M0 9H14L7 0Z" fill="#b4b4b4"/></svg>
<svg style="position:absolute;left:613px;top:1899px;" width="14" height="9" viewBox="0 0 14 9"><path d="M0 0H14L7 9Z" fill="#b4b4b4"/></svg>
<div style="position:absolute;left:610px;top:1572px;width:20px;height:316px;background:#5f5f5f;border-radius:10px;"></div>
<div style="position:absolute;left:632px;top:1364px;width:2px;height:556px;background:#232323;"></div>
<div style="position:absolute;left:634px;top:1365px;width:1683px;height:41px;background:#3f3f3f;"></div>
<div class="t" style="left:642.0px;top:1365.1px;font-size:24px;color:#c0c0c0;letter-spacing:0.495px;">Assets</div>
<svg style="position:absolute;left:733px;top:1376px;" width="10" height="18" viewBox="0 0 10 18"><path d="M1 1L9 9L1 17" fill="none" stroke="#9a9a9a" stroke-width="2.200"/></svg>
<div class="t" style="left:753.0px;top:1365.1px;font-size:24px;color:#c8c8c8;letter-spacing:-0.008px;font-weight:700;">Scenes</div>
<svg style="position:absolute;left:677.5px;top:1431.2px" width="87" height="103" viewBox="-43.3 -50 86.6 100" preserveAspectRatio="none"><defs><mask id="um3" maskUnits="userSpaceOnUse" x="-50" y="-55.00000000000001" width="100" height="110.00000000000001"><polygon points="0.00,-50.00 43.30,-25.00 43.30,25.00 0.00,50.00 -43.30,25.00 -43.30,-25.00" fill="#fff"/><polygon points="0.00,-33.00 21.00,-23.00 0.00,-11.00 -21.00,-23.00" fill="#000"/><polygon points="-4.05,-55.00 4.05,-55.00 4.05,-30.00 -4.05,-30.00" fill="#000"/><polygon points="-27.85,-9.75 -6.95,3.00 -6.95,28.50 -27.85,18.10" fill="#000"/><polygon points="-47.50,20.75 -25.00,7.75 -25.00,16.45 -47.50,29.45" fill="#000"/><polygon points="27.85,-9.75 6.95,3.00 6.95,28.50 27.85,18.10" fill="#000"/><polygon points="47.50,20.75 25.00,7.75 25.00,16.45 47.50,29.45" fill="#000"/></mask><linearGradient id="ug3" x1="0" y1="0" x2="1" y2="1"><stop offset="0" stop-color="#dcdcdc"/><stop offset="1" stop-color="#a6a6a6"/></linearGradient></defs><g mask="url(#um3)"><polygon points="0.00,-50.00 43.30,-25.00 43.30,25.00 0.00,50.00 -43.30,25.00 -43.30,-25.00" fill="#e8e8e8"/><polygon points="0.00,-50.00 43.30,-25.00 0.00,-2.50 -43.30,-25.00" fill="#f6f6f6"/><polygon points="-43.30,-25.00 0.00,-2.50 0.00,50.00 -43.30,25.00" fill="#e8e8e8"/><polygon points="43.30,-25.00 0.00,-2.50 0.00,50.00 43.30,25.00" fill="url(#ug3)"/></g></svg>
<div class="t" style="left:667.0px;top:1537.1px;font-size:21px;color:#d2d2d2;letter-spacing:-0.170px;">ClearScene</div>
<div style="position:absolute;left:634px;top:1877px;width:1683px;height:43px;background:#404040;"></div>
<div style="position:absolute;left:2175px;top:1897px;width:110px;height:4px;background:#5e5e5e;border-radius:2px;"></div>
<div style="position:absolute;left:2221px;top:1889px;width:20px;height:20px;background:#999;border-radius:50%;"></div>
<div style="position:absolute;left:2867px;top:1924px;width:2px;height:40px;background:#232323;"></div>
<div style="position:absolute;left:2919px;top:1924px;width:2px;height:40px;background:#232323;"></div>
<div style="position:absolute;left:2971px;top:1924px;width:2px;height:40px;background:#232323;"></div>
<svg style="position:absolute;left:2879px;top:1930px;" width="28" height="28" viewBox="0 0 28 28"><ellipse cx="14" cy="17.500" rx="8" ry="9.500" fill="#c4c4c4"/><ellipse cx="14" cy="7.500" rx="5.500" ry="4.500" fill="#c4c4c4"/><path d="M7 13L3 11.500L2.500 8M6.500 18.500H2M7.500 23L4 25L4 27.500M21 13L25 11.500L25.500 8M21.500 18.500H26M20.500 23L24 25L24 27.500M10.500 4.500L8 1.500M17.500 4.500L20 1.500" stroke="#c4c4c4" stroke-width="2.200" fill="none"/><path d="M3.500 0L29 26" stroke="#141414" stroke-width="2.600"/><path d="M1 1.500L27 27.500" stroke="#c4c4c4" stroke-width="2.400"/></svg>
<svg style="position:absolute;left:2931px;top:1930px;" width="28" height="28" viewBox="0 0 28 28"><ellipse cx="14" cy="6" rx="12" ry="5.500" fill="#c4c4c4"/><path d="M2 10.500Q14 18.500 26 10.500V15Q14 23 2 15Z" fill="#c4c4c4"/><path d="M2 18Q14 26 26 18V22Q14 30.500 2 22Z" fill="#c4c4c4"/><path d="M3.500 0L29 26" stroke="#141414" stroke-width="2.600"/><path d="M1 1.500L27 27.500" stroke="#c4c4c4" stroke-width="2.400"/></svg>
<svg style="position:absolute;left:2983px;top:1930px;" width="28" height="28" viewBox="0 0 28 28"><circle cx="14" cy="14" r="12.500" fill="none" stroke="#c4c4c4" stroke-width="2.200"/><path d="M8 14.500L12.500 18.500L20 9.500" fill="none" stroke="#c4c4c4" stroke-width="2.800"/></svg>
<div class="win" style="left:900px;top:386px;width:1535px;height:900px;border-radius:20px;background:#2c2c2c;box-shadow:0 0 0 1px rgba(0,0,0,.6),0 36px 80px 14px rgba(0,0,0,.62),0 10px 26px rgba(0,0,0,.4);"><div style="position:absolute;left:-900px;top:-386px;width:3024px;height:1964px;">
</div><div style="position:absolute;left:0;top:0;width:1535px;height:900px;box-sizing:border-box;border:1.500px solid rgba(255,255,255,.30);border-radius:20px;"></div></div>
<div class="win" style="left:770px;top:394px;width:1902px;height:1294px;border-radius:20px;background:#383838;box-shadow:0 0 0 1px rgba(0,0,0,.6),0 36px 80px 14px rgba(0,0,0,.62),0 10px 26px rgba(0,0,0,.4);"><div style="position:absolute;left:-770px;top:-394px;width:3024px;height:1964px;">
<div style="position:absolute;left:770px;top:394px;width:1902px;height:56px;background:#333333;"></div>
<div class="t" style="left:1617.5px;top:401.1px;font-size:27px;color:#a6a6a6;letter-spacing:0.091px;font-weight:700;">Project Settings</div>
<div style="position:absolute;left:770px;top:450px;width:1902px;height:52px;background:#141414;"></div>
<svg style="position:absolute;left:2636px;top:464px;" width="8" height="24" viewBox="0 0 8 24"><circle cx="4" cy="4" r="2.6" fill="#c4c4c4"/><circle cx="4" cy="12" r="2.6" fill="#c4c4c4"/><circle cx="4" cy="20" r="2.6" fill="#c4c4c4"/></svg>
<div style="position:absolute;left:770px;top:502px;width:1902px;height:41px;background:#3c3c3c;"></div>
<div style="position:absolute;left:2067px;top:507px;width:599px;height:31px;box-sizing:border-box;background:#2a2a2a;border:2px solid #212121;border-top-color:#0d0d0d;border-radius:8px;"></div>
<svg style="position:absolute;left:2076px;top:514px;" width="15" height="15" viewBox="0 0 24 24"><circle cx="9.500" cy="9.500" r="7.500" fill="none" stroke="#c4c4c4" stroke-width="3.4"/><path d="M15 15L23 23" stroke="#c4c4c4" stroke-width="4.0" stroke-linecap="round"/></svg>
<div style="position:absolute;left:770px;top:543px;width:1902px;height:1px;background:#232323;"></div>
<div style="position:absolute;left:770px;top:544px;width:548px;height:1143px;background:#383838;"></div>
<div style="position:absolute;left:770px;top:936px;width:548px;height:32px;background:#4d4d4d;"></div>
<div class="t" style="left:805.0px;top:1251.1px;font-size:24px;color:#b0b0b0;letter-spacing:0.600px;">TextMesh Pro</div>
<svg style="position:absolute;left:780.0px;top:1265.5px;" width="14" height="11" viewBox="0 0 14 11"><path d="M0 0H14L7.0 11Z" fill="#727272"/></svg>
<div class="t" style="left:832.0px;top:1283.1px;font-size:24px;color:#bcbcbc;letter-spacing:0.760px;">Settings</div>
<div class="t" style="left:805.0px;top:1315.1px;font-size:24px;color:#d2d2d2;letter-spacing:0.866px;">Time</div>
<div class="t" style="left:805.0px;top:1347.1px;font-size:24px;color:#d2d2d2;letter-spacing:0.677px;">Timeline</div>
<div class="t" style="left:805.0px;top:1379.1px;font-size:24px;color:#d2d2d2;letter-spacing:0.735px;">UI Toolkit</div>
<div class="t" style="left:805.0px;top:1411.1px;font-size:24px;color:#d2d2d2;letter-spacing:0.668px;">Version Control</div>
<div class="t" style="left:805.0px;top:1443.1px;font-size:24px;color:#d2d2d2;letter-spacing:0.646px;">Visual Scripting</div>
<div class="t" style="left:805.0px;top:1475.1px;font-size:24px;color:#d2d2d2;letter-spacing:0.427px;">XR Plugin Management</div>
<div style="position:absolute;left:1318px;top:544px;width:2px;height:1143px;background:#232323;"></div>
<div style="position:absolute;left:1320px;top:544px;width:1352px;height:50px;background:#383838;"></div>
<div style="position:absolute;left:1320px;top:594px;width:1351px;height:1093px;background:#383838;"></div>
<div class="t" style="left:1341.0px;top:550.1px;font-size:39px;color:#d6d6d6;letter-spacing:1.909px;-webkit-text-stroke:1.5px #d6d6d6;">Player</div>
<svg style="position:absolute;left:2564px;top:562px;" width="20" height="20" viewBox="0 0 20 20"><circle cx="10" cy="10" r="10" fill="#c4c4c4"/><text x="10" y="16.200" font-family="Liberation Sans" font-weight="700" font-size="17.5" text-anchor="middle" fill="#383838">?</text></svg>
<svg style="position:absolute;left:2602px;top:562px;" width="20" height="20" viewBox="0 0 20 20"><path d="M0 4.700H11.500M18 4.700H20M0 14.700H3M9.500 14.700H20" stroke="#c4c4c4" stroke-width="2.200"/><path d="M15 1V8.500M6.500 11V18.500" stroke="#c4c4c4" stroke-width="3.400" stroke-linecap="round"/></svg>
<svg style="position:absolute;left:2646px;top:560px;" width="8" height="24" viewBox="0 0 8 24"><circle cx="4" cy="4" r="2.6" fill="#c4c4c4"/><circle cx="4" cy="12" r="2.6" fill="#c4c4c4"/><circle cx="4" cy="20" r="2.6" fill="#c4c4c4"/></svg>
<div style="position:absolute;left:1349px;top:594px;width:1289px;height:1093px;background:#404040;border-left:1px solid #2a2a2a;border-right:1px solid #2a2a2a;box-sizing:border-box;"></div>
<div style="position:absolute;left:1320px;top:594px;width:1320px;height:20px;overflow:hidden;"><div class="t" style="left:41px;top:-24px;font-size:24px;color:#d2d2d2;letter-spacing:1.1px;">Settings for Android</div></div>
<div style="position:absolute;left:2647px;top:594px;width:24px;height:1093px;background:#353535;border-left:1px solid #2a2a2a;box-sizing:border-box;"></div>
<svg style="position:absolute;left:2653px;top:605px;" width="14" height="9" viewBox="0 0 14 9"><path d="M0 9H14L7 0Z" fill="#c4c4c4"/></svg>
<svg style="position:absolute;left:2653px;top:1667px;" width="14" height="9" viewBox="0 0 14 9"><path d="M0 0H14L7 9Z" fill="#c4c4c4"/></svg>
<div style="position:absolute;left:2650px;top:894px;width:20px;height:553px;background:#5f5f5f;border-radius:10px;"></div>
<div style="position:absolute;left:1358px;top:610px;width:1270px;height:54px;box-sizing:border-box;background:#474747;border:2px solid #2c2c2c;border-radius:8px;"></div>
<svg style="position:absolute;left:1380.0px;top:628.5px;" width="15" height="17" viewBox="0 0 15 17"><path d="M0 0V17L15 8.5Z" fill="#7a7a7a"/></svg>
<div class="t" style="left:1406.0px;top:615.8px;font-size:25px;color:#d4d4d4;letter-spacing:0.402px;font-weight:700;">Icon</div>
<div style="position:absolute;left:1358px;top:668px;width:1270px;height:54px;box-sizing:border-box;background:#474747;border:2px solid #2c2c2c;border-radius:8px;"></div>
<svg style="position:absolute;left:1380.0px;top:686.5px;" width="15" height="17" viewBox="0 0 15 17"><path d="M0 0V17L15 8.5Z" fill="#7a7a7a"/></svg>
<div class="t" style="left:1406.0px;top:673.8px;font-size:25px;color:#d4d4d4;letter-spacing:0.854px;font-weight:700;">Resolution and Presentation</div>
<div style="position:absolute;left:1358px;top:726px;width:1270px;height:54px;box-sizing:border-box;background:#474747;border:2px solid #2c2c2c;border-radius:8px;"></div>
<svg style="position:absolute;left:1380.0px;top:744.5px;" width="15" height="17" viewBox="0 0 15 17"><path d="M0 0V17L15 8.5Z" fill="#7a7a7a"/></svg>
<div class="t" style="left:1406.0px;top:731.8px;font-size:25px;color:#d4d4d4;letter-spacing:0.818px;font-weight:700;">Splash Image</div>
<div style="position:absolute;left:1358px;top:784px;width:1270px;height:54px;box-sizing:border-box;background:#474747;border:2px solid #2c2c2c;border-radius:8px;"></div>
<svg style="position:absolute;left:1380.0px;top:802.5px;" width="15" height="17" viewBox="0 0 15 17"><path d="M0 0V17L15 8.5Z" fill="#7a7a7a"/></svg>
<div class="t" style="left:1406.0px;top:789.8px;font-size:25px;color:#d4d4d4;letter-spacing:1.052px;font-weight:700;">Other Settings</div>
<div style="position:absolute;left:1358px;top:842px;width:1270px;height:902px;box-sizing:border-box;background:#474747;border:2px solid #2c2c2c;border-radius:8px;"></div>
<svg style="position:absolute;left:1378.0px;top:862.5px;" width="18" height="13" viewBox="0 0 18 13"><path d="M0 0H18L9.0 13Z" fill="#7a7a7a"/></svg>
<div class="t" style="left:1406.0px;top:847.8px;font-size:25px;color:#d4d4d4;letter-spacing:0.771px;font-weight:700;">Publishing Settings</div>
<div style="position:absolute;left:1373px;top:895px;width:476px;height:36px;box-sizing:border-box;background:#585858;border:2px solid #303030;border-bottom-color:#242424;border-radius:6px;"></div>
<div class="t" style="left:1498.0px;top:893.1px;font-size:24px;color:#e4e4e4;letter-spacing:0.590px;">Keystore Manager...</div>
<div class="t" style="left:1374.0px;top:931.6px;font-size:24px;color:#cfcfcf;letter-spacing:1.391px;font-weight:700;">Project Keystore</div>
<div class="t" style="left:1404.0px;top:968.6px;font-size:24px;color:#d2d2d2;letter-spacing:0.728px;">Custom Keystore</div>
<div style="position:absolute;left:1884px;top:974px;width:28px;height:28px;box-sizing:border-box;background:#2a2a2a;border:2px solid #212121;border-top-color:#151515;border-radius:5px;"></div>
<svg style="position:absolute;left:1889px;top:981px;" width="18" height="14" viewBox="0 0 18 14"><path d="M1.500 7.500L6.500 12L16.500 1.800" fill="none" stroke="#f0f0f0" stroke-width="2.800"/></svg>
<div style="position:absolute;left:1373px;top:1011px;width:506px;height:35px;box-sizing:border-box;background:#515151;border:2px solid #303030;border-bottom-color:#242424;border-radius:6px;"></div>
<div class="t" style="left:1381.0px;top:1008.1px;font-size:24px;color:#e4e4e4;letter-spacing:0.365px;">Select...</div>
<svg style="position:absolute;left:1853.0px;top:1024.5px;" width="14" height="9" viewBox="0 0 14 9"><path d="M0 0H14L7.0 9Z" fill="#c4c4c4"/></svg>
<div class="t" style="left:1404.0px;top:1048.6px;font-size:24px;color:#8a8a8a;letter-spacing:0.406px;">Path</div>
<div class="t" style="left:1886.0px;top:1048.6px;font-size:24px;color:#8a8a8a;letter-spacing:0.494px;">Select Keystore...</div>
<div class="t" style="left:1404.0px;top:1088.1px;font-size:24px;color:#8a8a8a;letter-spacing:0.578px;">Password</div>
<div style="position:absolute;left:1884px;top:1091px;width:729px;height:35px;box-sizing:border-box;background:#383838;border:2px solid #2b2b2b;border-top-color:#262626;border-radius:6px;"></div>
<div class="t" style="left:1376.0px;top:1123.1px;font-size:21px;color:#d2d2d2;letter-spacing:0.021px;">Enter password.</div>
<div class="t" style="left:1374.0px;top:1171.1px;font-size:24px;color:#cfcfcf;letter-spacing:1.358px;font-weight:700;">Project Key</div>
<div class="t" style="left:1404.0px;top:1208.1px;font-size:24px;color:#8a8a8a;letter-spacing:0.197px;">Alias</div>
<div style="position:absolute;left:1884px;top:1211px;width:729px;height:34px;box-sizing:border-box;background:#4b4b4b;border:2px solid #3a3a3a;border-bottom-color:#242424;border-radius:6px;"></div>
<div class="t" style="left:1892.0px;top:1207.1px;font-size:24px;color:#9a9a9a;letter-spacing:0.859px;">Debug</div>
<svg style="position:absolute;left:2587.0px;top:1224.5px;" width="14" height="9" viewBox="0 0 14 9"><path d="M0 0H14L7.0 9Z" fill="#9a9a9a"/></svg>
<div class="t" style="left:1404.0px;top:1248.1px;font-size:24px;color:#8a8a8a;letter-spacing:0.578px;">Password</div>
<div style="position:absolute;left:1884px;top:1251px;width:729px;height:35px;box-sizing:border-box;background:#383838;border:2px solid #2b2b2b;border-top-color:#262626;border-radius:6px;"></div>
<div class="t" style="left:1374.0px;top:1331.1px;font-size:24px;color:#cfcfcf;letter-spacing:0.603px;font-weight:700;">Build</div>
<div class="t" style="left:1404.0px;top:1368.1px;font-size:24px;color:#d2d2d2;letter-spacing:0.662px;">Custom Main Manifest</div>
<div style="position:absolute;left:1884px;top:1374px;width:28px;height:28px;box-sizing:border-box;background:#2a2a2a;border:2px solid #212121;border-top-color:#151515;border-radius:5px;"></div>
<div class="t" style="left:1404.0px;top:1408.1px;font-size:24px;color:#d2d2d2;letter-spacing:0.717px;">Custom Launcher Manifest</div>
<div style="position:absolute;left:1884px;top:1414px;width:28px;height:28px;box-sizing:border-box;background:#2a2a2a;border:2px solid #212121;border-top-color:#151515;border-radius:5px;"></div>
<div class="t" style="left:1404.0px;top:1448.1px;font-size:24px;color:#d2d2d2;letter-spacing:0.641px;">Custom Main Gradle Template</div>
<div style="position:absolute;left:1884px;top:1454px;width:28px;height:28px;box-sizing:border-box;background:#2a2a2a;border:2px solid #212121;border-top-color:#151515;border-radius:5px;"></div>
<svg style="position:absolute;left:1889px;top:1461px;" width="18" height="14" viewBox="0 0 18 14"><path d="M1.500 7.500L6.500 12L16.500 1.800" fill="none" stroke="#f0f0f0" stroke-width="2.800"/></svg>
<div class="t" style="left:1404.0px;top:1542.1px;font-size:24px;color:#d2d2d2;letter-spacing:0.654px;">Custom Launcher Gradle Template</div>
<div style="position:absolute;left:1884px;top:1548px;width:28px;height:28px;box-sizing:border-box;background:#2a2a2a;border:2px solid #212121;border-top-color:#151515;border-radius:5px;"></div>
<div class="t" style="left:1404.0px;top:1582.1px;font-size:24px;color:#d2d2d2;letter-spacing:0.579px;">Custom Base Gradle Template</div>
<div style="position:absolute;left:1884px;top:1588px;width:28px;height:28px;box-sizing:border-box;background:#2a2a2a;border:2px solid #212121;border-top-color:#151515;border-radius:5px;"></div>
<div class="t" style="left:1404.0px;top:1622.1px;font-size:24px;color:#d2d2d2;letter-spacing:0.695px;">Custom Gradle Properties Template</div>
<div style="position:absolute;left:1884px;top:1628px;width:28px;height:28px;box-sizing:border-box;background:#2a2a2a;border:2px solid #212121;border-top-color:#151515;border-radius:5px;"></div>
<svg style="position:absolute;left:1889px;top:1635px;" width="18" height="14" viewBox="0 0 18 14"><path d="M1.500 7.500L6.500 12L16.500 1.800" fill="none" stroke="#f0f0f0" stroke-width="2.800"/></svg>
<div class="t" style="left:1434.5px;top:1495.1px;font-size:24px;color:#d2d2d2;letter-spacing:0.733px;">Assets/Plugins/Android/mainTemplate.gradle</div>
<div class="t" style="left:1434.5px;top:1669.1px;font-size:24px;color:#d2d2d2;letter-spacing:0.814px;">Assets/Plugins/Android/gradleTemplate.properties</div>
</div><div style="position:absolute;left:0;top:0;width:1902px;height:1294px;box-sizing:border-box;border:1.500px solid rgba(255,255,255,.30);border-radius:20px;"></div></div>
<div class="win" style="left:286px;top:300px;width:1000px;height:976px;border-radius:20px;background:#3c3c3c;box-shadow:0 0 0 1px rgba(0,0,0,.6),0 36px 80px 14px rgba(0,0,0,.62),0 10px 26px rgba(0,0,0,.4);"><div style="position:absolute;left:-286px;top:-300px;width:3024px;height:1964px;">
<div style="position:absolute;left:302px;top:316px;width:24px;height:24px;background:#ed6a5e;border-radius:50%;"></div>
<div style="position:absolute;left:342px;top:316px;width:24px;height:24px;background:#5b5b5b;border-radius:50%;"></div>
<div style="position:absolute;left:382px;top:316px;width:24px;height:24px;background:#5b5b5b;border-radius:50%;"></div>
<div class="t" style="left:669.5px;top:306.6px;font-size:27px;color:#a9a9a9;letter-spacing:-0.067px;font-weight:700;">Keystore Manager</div>
<div style="position:absolute;left:286px;top:350px;width:991px;height:50px;overflow:hidden;">
<div class="t" style="left:8px;top:4.500px;font-size:26px;font-weight:700;color:#c2c2c2;letter-spacing:0.74px;">Create a new keystore with a new key or add a new key to an existing keystore</div></div>
<div style="position:absolute;left:293px;top:395px;width:298px;height:35px;box-sizing:border-box;background:#515151;border:2px solid #303030;border-bottom-color:#242424;border-radius:6px;"></div>
<div class="t" style="left:301.0px;top:392.1px;font-size:24px;color:#e4e4e4;letter-spacing:0.388px;">Keystore...</div>
<svg style="position:absolute;left:565.0px;top:408.5px;" width="14" height="9" viewBox="0 0 14 9"><path d="M0 0H14L7.0 9Z" fill="#c4c4c4"/></svg>
<div class="t" style="left:294.0px;top:430.1px;font-size:24px;color:#d2d2d2;letter-spacing:0.760px;">keyStore/blindSokoban.keystore</div>
<div class="t" style="left:294.0px;top:466.6px;font-size:24px;color:#d2d2d2;letter-spacing:0.578px;">Password</div>
<div style="position:absolute;left:596px;top:468.0px;width:684px;height:46px;box-sizing:border-box;background:#2a2a2a;border:2px solid #212121;border-top-color:#0d0d0d;border-radius:6px;"></div>
<div class="t" style="left:603.0px;top:466.6px;font-size:25px;color:#d2d2d2;letter-spacing:2.132px;">***************</div>
<div class="t" style="left:294.0px;top:517.1px;font-size:24px;color:#d2d2d2;letter-spacing:0.788px;">Confirm password</div>
<div style="position:absolute;left:596px;top:518.5px;width:684px;height:46px;box-sizing:border-box;background:#2a2a2a;border:2px solid #212121;border-top-color:#0d0d0d;border-radius:6px;"></div>
<div class="t" style="left:603.0px;top:517.1px;font-size:25px;color:#d2d2d2;letter-spacing:2.132px;">***************</div>
<div class="t" style="left:294.0px;top:594.1px;font-size:24px;color:#cfcfcf;letter-spacing:1.589px;font-weight:700;">New Key Values</div>
<div class="t" style="left:294.0px;top:647.1px;font-size:24px;color:#d2d2d2;letter-spacing:0.197px;">Alias</div>
<div style="position:absolute;left:596px;top:648.5px;width:684px;height:46px;box-sizing:border-box;background:#2a2a2a;border:2px solid #212121;border-top-color:#0d0d0d;border-radius:6px;"></div>
<div class="t" style="left:603.0px;top:647.1px;font-size:24px;color:#d2d2d2;letter-spacing:0.386px;">blind_sokoban_key</div>
<div class="t" style="left:294.0px;top:697.1px;font-size:24px;color:#d2d2d2;letter-spacing:0.578px;">Password</div>
<div style="position:absolute;left:596px;top:698.5px;width:684px;height:46px;box-sizing:border-box;background:#2a2a2a;border:2px solid #212121;border-top-color:#0d0d0d;border-radius:6px;"></div>
<div class="t" style="left:603.0px;top:697.1px;font-size:25px;color:#d2d2d2;letter-spacing:2.132px;">***************</div>
<div class="t" style="left:294.0px;top:747.1px;font-size:24px;color:#d2d2d2;letter-spacing:0.788px;">Confirm password</div>
<div style="position:absolute;left:596px;top:748.5px;width:684px;height:46px;box-sizing:border-box;background:#2a2a2a;border:2px solid #212121;border-top-color:#0d0d0d;border-radius:6px;"></div>
<div class="t" style="left:603.0px;top:747.1px;font-size:25px;color:#d2d2d2;letter-spacing:2.132px;">***************</div>
<div class="t" style="left:294.0px;top:797.1px;font-size:24px;color:#d2d2d2;letter-spacing:0.691px;">Validity (years)</div>
<div style="position:absolute;left:596px;top:798.5px;width:684px;height:46px;box-sizing:border-box;background:#2a2a2a;border:2px solid #212121;border-top-color:#0d0d0d;border-radius:6px;"></div>
<div class="t" style="left:603.0px;top:797.1px;font-size:24px;color:#d2d2d2;letter-spacing:0.656px;">50</div>
<div class="t" style="left:294.0px;top:862.1px;font-size:24px;color:#d2d2d2;letter-spacing:0.575px;">First and Last Name</div>
<div style="position:absolute;left:596px;top:863.5px;width:684px;height:46px;box-sizing:border-box;background:#2a2a2a;border:2px solid #212121;border-top-color:#0d0d0d;border-radius:6px;"></div>
<div class="t" style="left:294.0px;top:912.1px;font-size:24px;color:#d2d2d2;letter-spacing:0.627px;">Organizational Unit</div>
<div style="position:absolute;left:596px;top:913.5px;width:684px;height:46px;box-sizing:border-box;background:#2a2a2a;border:2px solid #212121;border-top-color:#0d0d0d;border-radius:6px;"></div>
<div class="t" style="left:294.0px;top:962.1px;font-size:24px;color:#d2d2d2;letter-spacing:0.578px;">Organization</div>
<div style="position:absolute;left:596px;top:963.5px;width:684px;height:46px;box-sizing:border-box;background:#2a2a2a;border:2px solid #212121;border-top-color:#0d0d0d;border-radius:6px;"></div>
<div class="t" style="left:603.0px;top:962.1px;font-size:24px;color:#d2d2d2;letter-spacing:0.662px;">DefaultCompany</div>
<div class="t" style="left:294.0px;top:1012.1px;font-size:24px;color:#d2d2d2;letter-spacing:0.727px;">City or Locality</div>
<div style="position:absolute;left:596px;top:1013.5px;width:684px;height:46px;box-sizing:border-box;background:#2a2a2a;border:2px solid #212121;border-top-color:#0d0d0d;border-radius:6px;"></div>
<div class="t" style="left:294.0px;top:1062.1px;font-size:24px;color:#d2d2d2;letter-spacing:0.582px;">State or Province</div>
<div style="position:absolute;left:596px;top:1063.5px;width:684px;height:46px;box-sizing:border-box;background:#2a2a2a;border:2px solid #212121;border-top-color:#0d0d0d;border-radius:6px;"></div>
<div class="t" style="left:294.0px;top:1112.1px;font-size:24px;color:#7baefa;letter-spacing:0.543px;">Country Code (XX)</div>
<div style="position:absolute;left:596px;top:1114px;width:684px;height:46px;box-sizing:border-box;background:#2a2a2a;border:2px solid #3a79bb;border-radius:6px;"></div>
<div style="position:absolute;left:1021px;top:1224px;width:258px;height:35px;box-sizing:border-box;background:#585858;border:2px solid #303030;border-bottom-color:#242424;border-radius:6px;"></div>
<div class="t" style="left:1102.5px;top:1221.1px;font-size:24px;color:#e4e4e4;letter-spacing:0.609px;">Add Key</div>
</div><div style="position:absolute;left:0;top:0;width:1000px;height:976px;box-sizing:border-box;border:1.500px solid rgba(255,255,255,.3);border-radius:20px;"></div></div>
</body></html>
